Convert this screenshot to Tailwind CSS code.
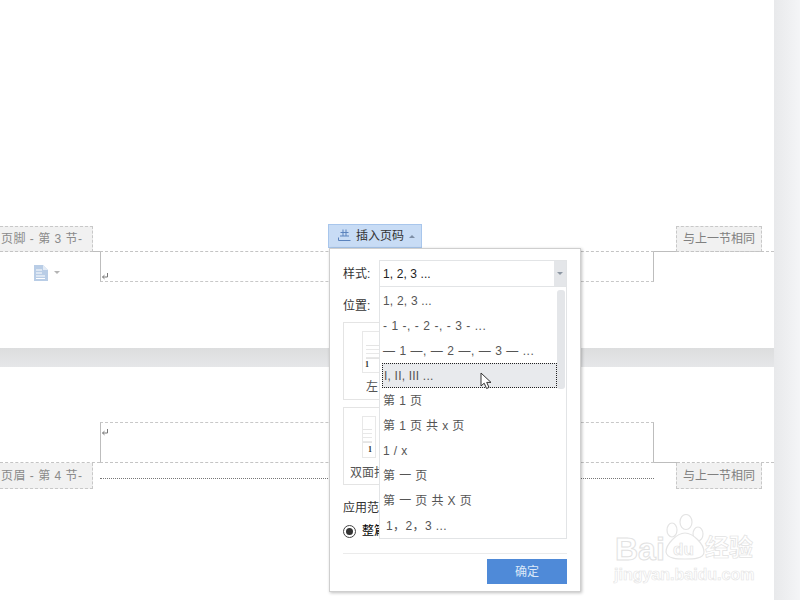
<!DOCTYPE html>
<html lang="zh">
<head>
    <meta charset="utf-8"/>
    <title>插入页码</title>
    <script src="https://cdn.jsdelivr.net/npm/@tailwindcss/browser@4"></script>
</head>
<body class="relative w-[800px] h-[600px] overflow-hidden flex bg-[#f3f4f6] font-['Liberation_Sans','Noto_Sans_CJK_SC',sans-serif] text-[12px]">
    <!-- document column -->
    <main class="w-[774px] flex flex-col shrink-0">
        <!-- page 1 -->
        <section class="h-[348px] bg-white pt-[226px] shrink-0">
            <div class="h-[25px] flex justify-between pr-[12px]">
                <div class="w-[93px] h-[26px] pl-[1px] flex items-center bg-[#f1f1f1] border border-l-0 border-dashed border-[#c8c8c8] text-[#8a8a8a] tracking-[0.5px] whitespace-pre">页脚 - 第 3 节-</div>
                <div class="w-[86px] h-[26px] flex items-center justify-center bg-[#f1f1f1] border border-dashed border-[#c8c8c8] text-[#808080]">与上一节相同</div>
            </div>
            <!-- footer line -->
            <div class="h-px flex">
                <div class="w-[93px] border-t border-dashed border-[#c4c4c4]"></div>
                <div class="w-[7px] border-t border-[#bdbdbd]"></div>
                <div class="w-[554px] border-t border-dashed border-[#c4c4c4]"></div>
                <div class="w-[22px] border-t border-[#bdbdbd]"></div>
                <div class="flex-1 border-t border-dashed border-[#c4c4c4]"></div>
            </div>
            <div class="h-[30px] flex">
                <div class="w-[100px] flex items-start pl-[34px] pt-[13px] gap-[6px]">
                    <svg class="w-[14px] h-[16px]" viewBox="0 0 14 16"><path d="M0 0H9L14 5V16H0Z" fill="#b9cde6"/><path d="M2 5H8M2 8H8M2 11H11M2 13.5H11" stroke="#fff" stroke-width="1"/><path d="M9 0V5H14Z" fill="#e3ebf5"/></svg>
                    <span class="mt-[6px] w-0 h-0 border-x-[3px] border-x-transparent border-t-[3px] border-t-[#b4b4b4]"></span>
                </div>
                <div class="w-[554px] h-[30px] border-x border-x-[#bdbdbd] border-b border-b-[#c8c8c8] border-dashed [border-left-style:solid] [border-right-style:solid] flex items-end">
                    <svg class="w-[8px] h-[8px] mb-[1px]" viewBox="0 0 8 8" fill="none" stroke="#777"><path d="M6.5 1V5H1.5M3.5 3.2L1.5 5L3.5 6.8"/></svg>
                </div>
            </div>
        </section>
        <!-- gap between pages -->
        <div class="h-[19px] shrink-0 bg-gradient-to-b from-[#dcddde] to-[#e6e7e9]"></div>
        <!-- page 2 -->
        <section class="flex-1 bg-white pt-[55px]">
            <div class="ml-[100px] w-[554px] h-[40px] border-x border-x-[#bdbdbd] border-t border-t-[#c8c8c8] border-dashed [border-left-style:solid] [border-right-style:solid]">
                <svg class="w-[8px] h-[8px] mt-[5px]" viewBox="0 0 8 8" fill="none" stroke="#777"><path d="M6.5 1V5H1.5M3.5 3.2L1.5 5L3.5 6.8"/></svg>
            </div>
            <!-- header line -->
            <div class="h-px flex">
                <div class="w-[100px] border-t border-dashed border-[#c4c4c4]"></div>
                <div class="w-[554px] border-t border-dashed border-[#c4c4c4]"></div>
                <div class="w-[23px] border-t border-[#bdbdbd]"></div>
                <div class="flex-1 border-t border-dashed border-[#c4c4c4]"></div>
            </div>
            <div class="h-[26px] flex">
                <div class="w-[93px] h-[26px] pl-[1px] flex items-center bg-[#f1f1f1] border border-l-0 border-t-0 border-dashed border-[#c8c8c8] text-[#8a8a8a] tracking-[0.5px] whitespace-pre">页眉 - 第 4 节-</div>
                <div class="ml-[7px] w-[554px] h-[16px] border-b border-dotted border-[#777]"></div>
                <div class="ml-[22px] w-[86px] h-[26px] flex items-center justify-center bg-[#f1f1f1] border border-t-0 border-dashed border-[#c8c8c8] text-[#808080]">与上一节相同</div>
            </div>
        </section>
    </main>
    <!-- right gutter -->
    <div class="flex-1 bg-gradient-to-r from-[#e8e9eb] to-[#f4f5f7]"></div>

    <!-- insert page number tab -->
    <button class="absolute left-[328px] top-[224px] w-[94px] h-[24px] flex items-center pl-[9px] gap-[5px] bg-[#c8dcf5] border border-[#a8c6ec] text-[#333]" type="button">
        <svg class="w-[13px] h-[13px] -mt-[2px]" viewBox="0 0 13 13" fill="none" stroke="#5b83bd"><path d="M2.5 3.5H10.5M2 7H11M5 0.5V7M8 0.5V7M0.5 8.5V11.5H12.5"/></svg>
        <span>插入页码</span>
        <span class="w-0 h-0 border-x-[3px] border-x-transparent border-b-[3px] border-b-[#7d8ea6]"></span>
    </button>

    <!-- dialog -->
    <div class="absolute left-[329px] top-[248px] w-[252px] h-[344px] bg-white border border-[#cfcfcf] shadow-[1px_1px_3px_rgba(0,0,0,0.25)] px-[13px] text-[#333]">
        <div class="h-[39px] flex items-end pb-[5px]">样式:</div>
        <div class="mt-[9px] h-[18px] flex items-center">位置:</div>
        <div class="mt-[7px] flex flex-col gap-[7px]">
            <div class="w-[90px] h-[78px] border border-[#e4e4e4] pl-[18px] pt-[8px]">
                <div class="w-[18px] h-[42px] border border-[#e8e8e8] flex flex-col pt-[13px] pl-[3px] text-[#333]">
                    <div class="h-[14px] border-y border-[#e4e4e4] bg-[linear-gradient(#fff_3px,#e8e8e8_3px,#e8e8e8_4px,#fff_4px)] bg-[length:100%_4px]"></div>
                    <div class="mt-[1px] -ml-[1px] font-['Liberation_Serif',serif] font-bold text-[8px] leading-[10px]">1</div>
                </div>
                <div class="mt-[5px] ml-[4px] w-[13px] overflow-hidden whitespace-nowrap text-[#555]">左</div>
            </div>
            <div class="w-[90px] h-[78px] border border-[#e4e4e4] pl-[18px] pt-[8px]">
                <div class="w-[14px] h-[42px] border border-[#e8e8e8] flex flex-col items-end pt-[12px] pr-[3px] text-[#333]">
                    <div class="w-full h-[14px] border-y border-[#e4e4e4] bg-[linear-gradient(#fff_3px,#e8e8e8_3px,#e8e8e8_4px,#fff_4px)] bg-[length:100%_4px]"></div>
                    <div class="mt-[2px] font-['Liberation_Serif',serif] font-bold text-[8px] leading-[10px]">1</div>
                </div>
                <div class="mt-[6px] -ml-[12px] w-[29px] overflow-hidden whitespace-nowrap text-[#555]">双面打</div>
            </div>
        </div>
        <div class="mt-[14px] w-[36px] overflow-hidden whitespace-nowrap">应用范</div>
        <div class="mt-[5px] flex items-center gap-[6px]">
            <span class="w-[13px] h-[13px] rounded-full border border-[#444] flex items-center justify-center"><span class="w-[7px] h-[7px] rounded-full bg-[#333]"></span></span>
            <span class="w-[17px] overflow-hidden whitespace-nowrap text-black">整篇</span>
        </div>
        <div class="absolute left-[13px] right-[13px] top-[304px] border-t border-[#ebebeb]"></div>
        <button class="absolute right-[13px] top-[310px] w-[80px] h-[25px] bg-[#4f8ad8] text-[#dce9f9]" type="button">确定</button>
    </div>

    <!-- style select -->
    <div class="absolute left-[379px] top-[260px] w-[188px] h-[27px] bg-white border border-[#e2e4e6] flex items-center pl-[3px] text-[#222] tracking-[0.1px]">
        <span class="flex-1">1, 2, 3 ...</span>
        <span class="w-[12px] h-full bg-[#e4e6e9] flex items-center justify-center"><span class="w-0 h-0 border-x-[3px] border-x-transparent border-t-[3px] border-t-[#8d97a3]"></span></span>
    </div>

    <!-- style dropdown list -->
    <ul class="absolute left-[379px] top-[287px] w-[188px] h-[252px] bg-white border border-[#e2e4e6] border-t-0 text-[#555] pt-[1px]">
        <li class="h-[25px] flex items-center pl-[3px] tracking-[0.2px]">1, 2, 3 ...</li>
        <li class="h-[25px] flex items-center pl-[3px] tracking-[0.55px]">- 1 -, - 2 -, - 3 - ...</li>
        <li class="h-[25px] flex items-center pl-[3px] tracking-[0.55px]">— 1 —, — 2 —, — 3 — ...</li>
        <li class="ml-[2px] w-[175px] h-[25px] flex items-center pl-[1px] bg-[#e8eaed] border border-dotted border-[#222] tracking-[0.2px]">I, II, III ...</li>
        <li class="h-[25px] flex items-center pl-[3px] tracking-[0.4px] whitespace-pre">第 1 页</li>
        <li class="h-[25px] flex items-center pl-[3px] tracking-[0.4px] whitespace-pre">第 1 页 共 x 页</li>
        <li class="h-[25px] flex items-center pl-[3px] tracking-[0.4px] whitespace-pre">1 / x</li>
        <li class="h-[25px] flex items-center pl-[3px] tracking-[0.4px] whitespace-pre">第 一 页</li>
        <li class="h-[25px] flex items-center pl-[3px] tracking-[0.4px] whitespace-pre">第 一 页 共 X 页</li>
        <li class="h-[25px] flex items-center pl-[6px] tracking-[0.4px] whitespace-pre">1，2，3 ...</li>
        <li class="absolute left-[177px] top-[3px] w-[8px] h-[99px] rounded-[3px] bg-[#e4e6e9]"></li>
    </ul>

    <!-- mouse pointer -->
    <svg class="absolute left-[480px] top-[372px] w-[14px] h-[18px]" viewBox="0 0 14 18"><path d="M1 1V14L4.2 11.2L6.6 16.5L9 15.4L6.7 10.4H11Z" fill="#fff" stroke="#333"/></svg>

    <!-- baidu watermark -->
    <div class="absolute left-[612px] top-[512px] w-[150px] h-[84px] text-white pointer-events-none">
        <svg class="absolute left-[52px] top-[2px] w-[42px] h-[46px]" viewBox="0 0 42 46" fill="#fff" stroke="#e4e4e4" stroke-width="1.2">
            <ellipse cx="8" cy="16" rx="5" ry="7"/><ellipse cx="22" cy="8" rx="6" ry="7.5"/><ellipse cx="34" cy="20" rx="5" ry="7"/>
            <path d="M21 19C13 19 2 30 2 38C3 45 14 45 21 45C28 45 40 45 40 38C40 30 29 19 21 19Z"/>
        </svg>
        <span class="absolute left-[3px] top-[17px] font-bold text-[32px] leading-[40px] [-webkit-text-stroke:1px_#e2e2e2]">Bai</span>
        <span class="absolute left-[61px] top-[26px] font-bold text-[17px] leading-[24px] [-webkit-text-stroke:0.7px_#e2e2e2]">du</span>
        <span class="absolute left-[93px] top-[22px] font-bold text-[24px] leading-[28px] [-webkit-text-stroke:0.7px_#e2e2e2]">经验</span>
        <span class="absolute left-[2px] top-[53px] font-bold text-[16px] leading-[20px] [-webkit-text-stroke:0.6px_#e4e4e4] whitespace-nowrap">jingyan.baidu.com</span>
    </div>
</body>
</html>
